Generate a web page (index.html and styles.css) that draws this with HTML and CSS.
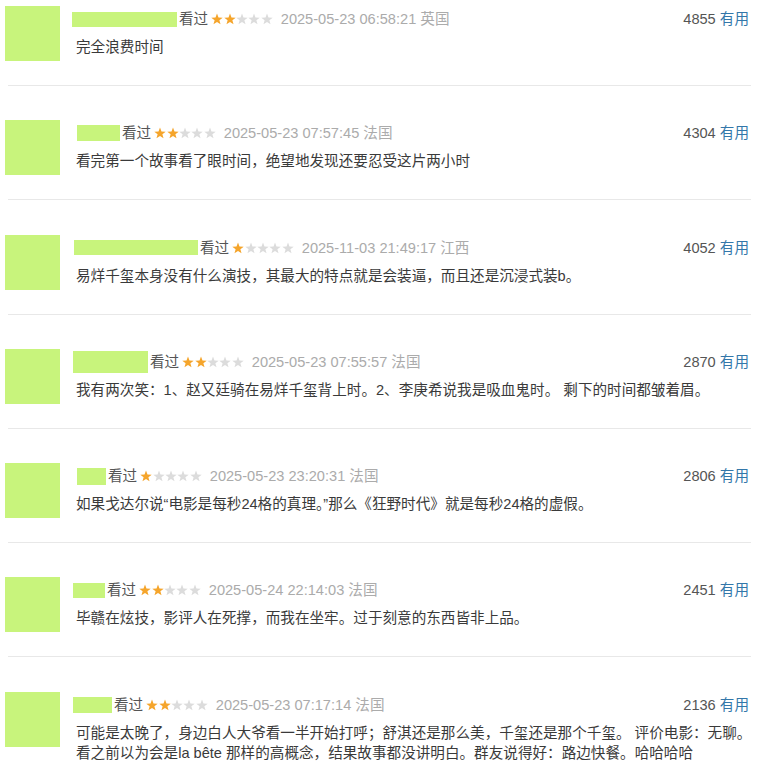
FILE: index.html
```html
<!DOCTYPE html>
<html lang="zh-CN">
<head>
<meta charset="utf-8">
<link rel="stylesheet" href="styles.css">
</head>
<body>
<svg class="defs" width="0" height="0" aria-hidden="true">
  <symbol id="star" viewBox="0 0 12 12">
    <polygon points="6,0.5 7.47,4.48 11.71,4.65 8.38,7.27 9.53,11.35 6,9 2.47,11.35 3.62,7.27 0.29,4.65 4.53,4.48"/>
  </symbol>
</svg>
<div class="list">
  <div class="item">
    <div class="avatar"></div>
    <div class="content">
      <div class="head">
        <span class="name n1"></span><span class="watched">看过</span>
        <span class="stars"><svg class="star on"><use href="#star"/></svg><svg class="star on"><use href="#star"/></svg><svg class="star"><use href="#star"/></svg><svg class="star"><use href="#star"/></svg><svg class="star"><use href="#star"/></svg></span>
        <span class="time">2025-05-23 06:58:21 英国</span>
        <span class="vote">4855 <a class="useful">有用</a></span>
      </div>
      <div class="comment"><span class="line">完全浪费时间</span></div>
    </div>
  </div>
  <div class="item">
    <div class="avatar"></div>
    <div class="content">
      <div class="head">
        <span class="name n2"></span><span class="watched">看过</span>
        <span class="stars"><svg class="star on"><use href="#star"/></svg><svg class="star on"><use href="#star"/></svg><svg class="star"><use href="#star"/></svg><svg class="star"><use href="#star"/></svg><svg class="star"><use href="#star"/></svg></span>
        <span class="time">2025-05-23 07:57:45 法国</span>
        <span class="vote">4304 <a class="useful">有用</a></span>
      </div>
      <div class="comment"><span class="line">看完第一个故事看了眼时间，绝望地发现还要忍受这片两小时</span></div>
    </div>
  </div>
  <div class="item">
    <div class="avatar"></div>
    <div class="content">
      <div class="head">
        <span class="name n3"></span><span class="watched">看过</span>
        <span class="stars"><svg class="star on"><use href="#star"/></svg><svg class="star"><use href="#star"/></svg><svg class="star"><use href="#star"/></svg><svg class="star"><use href="#star"/></svg><svg class="star"><use href="#star"/></svg></span>
        <span class="time">2025-11-03 21:49:17 江西</span>
        <span class="vote">4052 <a class="useful">有用</a></span>
      </div>
      <div class="comment"><span class="line">易烊千玺本身没有什么演技，其最大的特点就是会装逼，而且还是沉浸式装b。</span></div>
    </div>
  </div>
  <div class="item">
    <div class="avatar"></div>
    <div class="content">
      <div class="head">
        <span class="name n4"></span><span class="watched">看过</span>
        <span class="stars"><svg class="star on"><use href="#star"/></svg><svg class="star on"><use href="#star"/></svg><svg class="star"><use href="#star"/></svg><svg class="star"><use href="#star"/></svg><svg class="star"><use href="#star"/></svg></span>
        <span class="time">2025-05-23 07:55:57 法国</span>
        <span class="vote">2870 <a class="useful">有用</a></span>
      </div>
      <div class="comment"><span class="line">我有两次笑：1、赵又廷骑在易烊千玺背上时。2、李庚希说我是吸血鬼时。 剩下的时间都皱着眉。</span></div>
    </div>
  </div>
  <div class="item">
    <div class="avatar"></div>
    <div class="content">
      <div class="head">
        <span class="name n5"></span><span class="watched">看过</span>
        <span class="stars"><svg class="star on"><use href="#star"/></svg><svg class="star"><use href="#star"/></svg><svg class="star"><use href="#star"/></svg><svg class="star"><use href="#star"/></svg><svg class="star"><use href="#star"/></svg></span>
        <span class="time">2025-05-23 23:20:31 法国</span>
        <span class="vote">2806 <a class="useful">有用</a></span>
      </div>
      <div class="comment"><span class="line">如果戈达尔说“电影是每秒24格的真理。”那么《狂野时代》就是每秒24格的虚假。</span></div>
    </div>
  </div>
  <div class="item">
    <div class="avatar"></div>
    <div class="content">
      <div class="head">
        <span class="name n6"></span><span class="watched">看过</span>
        <span class="stars"><svg class="star on"><use href="#star"/></svg><svg class="star on"><use href="#star"/></svg><svg class="star"><use href="#star"/></svg><svg class="star"><use href="#star"/></svg><svg class="star"><use href="#star"/></svg></span>
        <span class="time">2025-05-24 22:14:03 法国</span>
        <span class="vote">2451 <a class="useful">有用</a></span>
      </div>
      <div class="comment"><span class="line">毕赣在炫技，影评人在死撑，而我在坐牢。过于刻意的东西皆非上品。</span></div>
    </div>
  </div>
  <div class="item">
    <div class="avatar"></div>
    <div class="content">
      <div class="head">
        <span class="name n7"></span><span class="watched">看过</span>
        <span class="stars"><svg class="star on"><use href="#star"/></svg><svg class="star on"><use href="#star"/></svg><svg class="star"><use href="#star"/></svg><svg class="star"><use href="#star"/></svg><svg class="star"><use href="#star"/></svg></span>
        <span class="time">2025-05-23 07:17:14 法国</span>
        <span class="vote">2136 <a class="useful">有用</a></span>
      </div>
      <div class="comment"><span class="line">可能是太晚了，身边白人大爷看一半开始打呼；舒淇还是那么美，千玺还是那个千玺。 评价电影：无聊。</span><span class="line">看之前以为会是la bête 那样的高概念，结果故事都没讲明白。群友说得好：路边快餐。哈哈哈哈</span></div>
    </div>
  </div>
</div>
</body>
</html>
```

FILE: styles.css
```css
html, body {
  margin: 0;
  padding: 0;
  background: #ffffff;
}

body {
  font-family: "Liberation Sans", "Noto Sans CJK SC", sans-serif;
  font-size: 14.6px;
  line-height: 20px;
  color: #3c3c3c;
  overflow: hidden;
}

.defs {
  position: absolute;
  width: 0;
  height: 0;
  overflow: hidden;
}

.item {
  display: flex;
  align-items: flex-start;
  margin: 0 18px 28.3px 8px;
  padding: 6px 2px 24px 0;
  border-bottom: 1px solid #e8e8e8;
}

.avatar {
  flex: none;
  width: 55px;
  height: 55px;
  margin-left: -3px;
  background: #c8f47c;
}

.content {
  flex: 1;
  min-width: 0;
  margin-left: 16px;
}

.head {
  display: flex;
  align-items: center;
  height: 20px;
  margin-top: 3px;
  white-space: nowrap;
}

.name {
  flex: none;
  height: 15px;
  margin-right: 2px;
  background: #c8f47c;
}

.n1 { width: 105px; margin-left: -4px; }
.n2 { width: 43px; margin-left: 1px; height: 16px; }
.n3 { width: 124px; margin-left: -2px; }
.n4 { width: 75px; margin-left: -3px; height: 22px; }
.n5 { width: 29px; margin-left: 1px; height: 17px; }
.n6 { width: 32px; margin-left: -3px; }
.n7 { width: 39px; margin-left: -3px; height: 16px; }

.watched {
  color: #555;
  margin-right: 3px;
}

.stars {
  display: flex;
  gap: 0.4px;
  margin-right: 8px;
}

.star {
  width: 12px;
  height: 12px;
  fill: #dcdcdc;
}

.star.on {
  fill: #f5a52c;
}

.time {
  color: #ababab;
}

.vote {
  margin-left: auto;
  color: #555;
}

.useful {
  color: #3377aa;
  text-decoration: none;
}

.comment {
  margin-top: 8px;
  color: #3a3a3a;
}

.line {
  display: block;
  height: 20px;
  white-space: nowrap;
}
```
